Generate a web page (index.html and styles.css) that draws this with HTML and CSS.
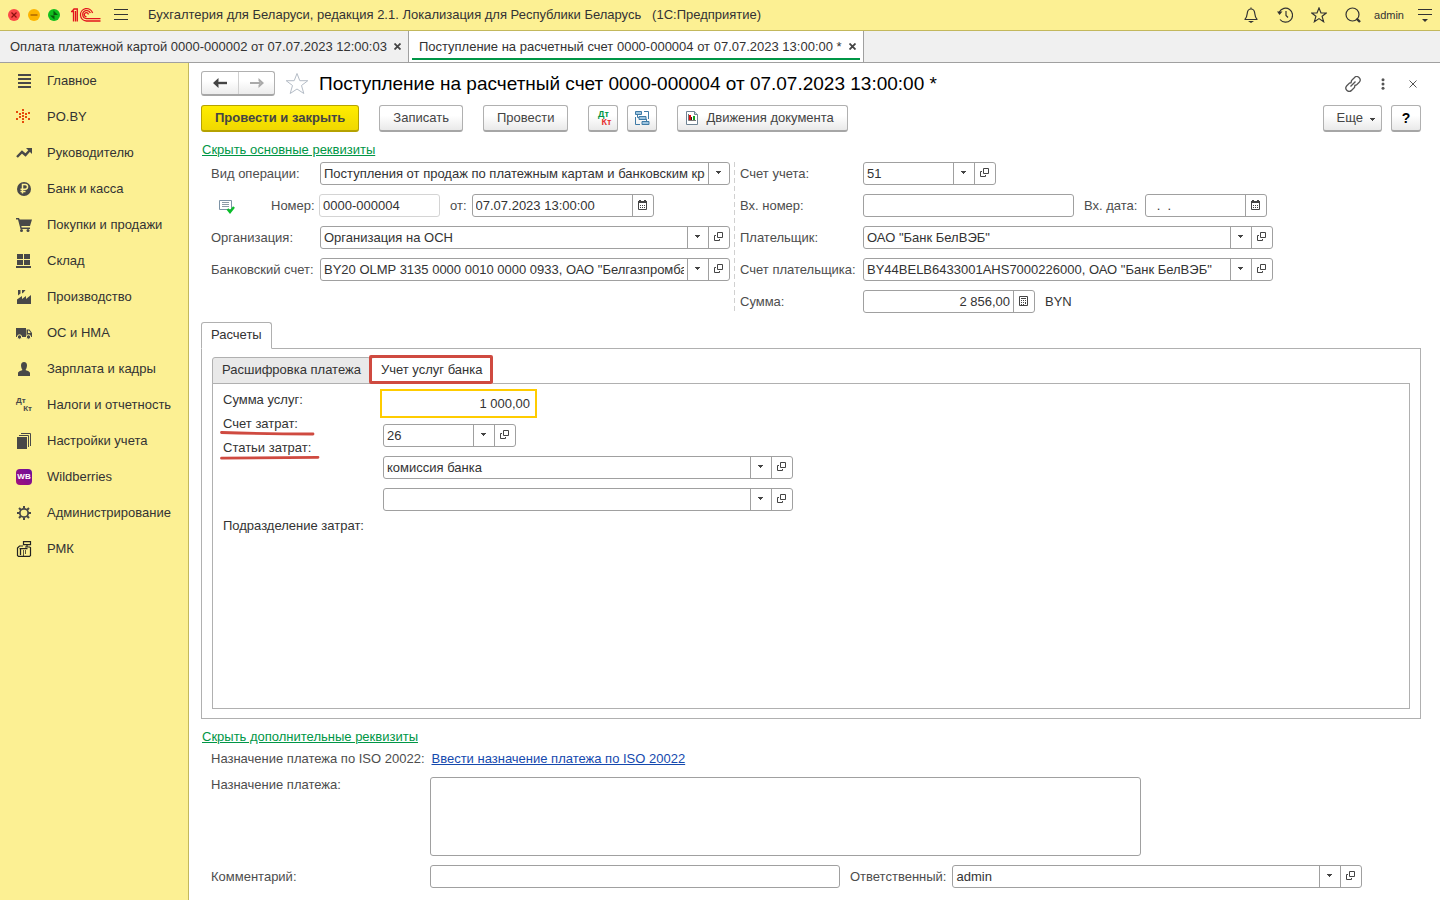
FILE: index.html
```html
<!DOCTYPE html>
<html lang="ru">
<head>
<meta charset="utf-8">
<meta name="viewport" content="width=device-width, initial-scale=1">
<title>Поступление на расчетный счет</title>
<link rel="stylesheet" href="styles.css">
</head>
<body>
<svg class="defs" aria-hidden="true">
  <symbol id="i-down" viewBox="0 0 8 4"><path d="M1 0h5v1h-1v1h-1v1h-1v-1h-1v-1h-1z" fill="#444"/></symbol>
  <symbol id="i-open" viewBox="0 0 10 10"><path d="M3.500.5h5v5h-5zM2 3.500H.5v5h5V7" fill="none" stroke="#444"/></symbol>
  <symbol id="i-cal" viewBox="0 0 10 10"><path d="M.5 1.500h8v8h-8z" fill="none" stroke="#444"/><path d="M0 1h9v2H0zM1 0h2v1H1zM6 0h2v1H6z" fill="#444"/><path d="M2 5h1v1H2zM4 5h1v1H4zM6 5h1v1H6zM2 7h1v1H2zM4 7h1v1H4zM6 7h1v1H6z" fill="#444"/></symbol>
  <symbol id="i-calc" viewBox="0 0 10 11"><path d="M.5.5h8v9h-8zM2 2.500h5" fill="none" stroke="#444"/><path d="M2 4h1v1H2zM4 4h1v1H4zM6 4h1v1H6zM2 6h1v1H2zM4 6h1v1H4zM6 6h1v2H6zM2 8h1v1H2zM4 8h1v1H4z" fill="#444"/></symbol>
</svg>

<header class="topbar">
  <button class="dot dot-red" aria-label="Закрыть окно"><svg viewBox="0 0 12 12"><path d="M3.500 3.500l5 5M8.500 3.500l-5 5" stroke="#8c1010" stroke-width="1.200"/></svg></button>
  <button class="dot dot-amber" aria-label="Свернуть"><svg viewBox="0 0 12 12"><path d="M2.500 6h7" stroke="#a86400" stroke-width="1.400"/></svg></button>
  <button class="dot dot-green" aria-label="Развернуть"><svg viewBox="0 0 12 12"><path d="M2 6.500h4.500V10.500zM5.500 1.500V6H10z" fill="#075c0b"/></svg></button>
  <svg class="logo" viewBox="0 0 30 16" fill="none" stroke="#e2141c" stroke-width="1.300"><path d="M0 4.500h2.500V14.500M1 4.500 3 2h3.300V14.500M4.500 4V14.500"/><path d="M21.600 6A6.200 6.200 0 1 0 15.500 14H29.500M19.400 6A4 4 0 1 0 15.500 11.600H29.500M17.300 7.500A2 2 0 1 0 15.500 9.600"/></svg>
  <button class="plain menu" aria-label="Меню"><svg width="14" height="12" viewBox="0 0 14 12"><path d="M0 .5h14M0 5.500h14M0 10.500h14" stroke="#333"/></svg></button>
  <span class="app-title">Бухгалтерия для Беларуси, редакция 2.1. Локализация для Республики Беларусь &nbsp; (1С:Предприятие)</span>
  <div class="tools">
    <button class="plain tool" aria-label="Уведомления"><svg width="16" height="16" viewBox="0 0 16 16" fill="none" stroke="#333" stroke-width="1.200"><path d="M8 .5v1.500M1.500 12.500h13M2 12.300C3.900 10.500 4 8.500 4.300 6 4.600 3.400 6 2 8 2s3.400 1.400 3.700 4c.3 2.500.4 4.500 2.300 6.300"/><path d="M5 14h6l-3 2z" fill="#333" stroke="none"/></svg></button>
    <button class="plain tool" aria-label="История"><svg width="16" height="16" viewBox="0 0 16 16" fill="none" stroke="#333" stroke-width="1.200"><path d="M2.300 5A7 7 0 1 1 3 12.500M9 4v4.500l2 2"/><path d="M0 4.500h5.500L2.500 8z" fill="#333" stroke="none"/></svg></button>
    <button class="plain tool" aria-label="Избранное"><svg width="16" height="16" viewBox="0 0 16 16" fill="none" stroke="#333" stroke-width="1.200"><path d="M8 1l2 5h5.300l-4.200 3.300 1.500 5.400L8 11.600l-4.600 3.100 1.500-5.400L.7 6H6z"/></svg></button>
    <button class="plain tool" aria-label="Поиск"><svg width="16" height="16" viewBox="0 0 16 16" fill="none" stroke="#333"><circle cx="7.500" cy="7.500" r="6.500" stroke-width="1.200"/><path d="M11.500 11.500l3.500 3.500" stroke-width="2.400"/></svg></button>
    <button class="plain user">admin</button>
    <button class="plain" aria-label="Сервис"><svg width="14" height="14" viewBox="0 0 14 14"><path d="M0 1.500h14M0 6.500h14" stroke="#333"/><path d="M4 11h6l-3 3z" fill="#333"/></svg></button>
  </div>
</header>

<nav class="windows" aria-label="Открытые окна">
  <div class="win"><button class="plain">Оплата платежной картой 0000-000002 от 07.07.2023 12:00:03</button><button class="plain x" aria-label="Закрыть"><svg width="7" height="7" viewBox="0 0 7 7"><path d="M.5.5l6 6M6.500.5l-6 6" stroke="#444" stroke-width="1.800"/></svg></button></div>
  <div class="win win-on"><button class="plain">Поступление на расчетный счет 0000-000004 от 07.07.2023 13:00:00 *</button><button class="plain x" aria-label="Закрыть"><svg width="7" height="7" viewBox="0 0 7 7"><path d="M.5.5l6 6M6.500.5l-6 6" stroke="#444" stroke-width="1.800"/></svg></button></div>
</nav>

<div class="body">
  <nav class="side" aria-label="Разделы">
    <a href="#"><svg viewBox="0 0 16 16"><path d="M2 1h13v2H2zM2 5h13v2H2zM2 9h13v2H2zM2 13h13v2H2z"/></svg>Главное</a>
    <a href="#"><svg viewBox="0 0 16 16" fill="#e64a0c"><path d="M6 0h2v2H6zM6 3h2v2H6zM6 6h2v2H6zM6 9h2v2H6zM6 12h2v2H6zM0 2h2v2H0zM3 4h2v2H3zM9 4h2v2H9zM12 3h2v2h-2zM3 7h2v2H3zM9 7h2v2H9zM0 9h2v2H0zM12 9h2v2h-2z"/></svg>PO.BY</a>
    <a href="#"><svg viewBox="0 0 16 16"><path d="M1 12l5-5 3.500 3L14 5" fill="none" stroke="#484848" stroke-width="2.400"/><path d="M10 3h6v6z"/></svg>Руководителю</a>
    <a href="#"><svg viewBox="0 0 16 16"><circle cx="8" cy="8" r="7"/><path d="M6.500 12.500v-9h2.700a2.300 2.300 0 0 1 0 4.700H4.500M4.500 10.500h5" fill="none" stroke="#fcf093" stroke-width="1.500"/></svg>Банк и касса</a>
    <a href="#"><svg viewBox="0 0 16 16"><path d="M0 1h3l.7 1.500H16L14 9H5.300l.4 1.500H14V12H4.500L2 2.500H0z"/><circle cx="5.500" cy="13.500" r="1.500"/><circle cx="12" cy="13.500" r="1.500"/></svg>Покупки и продажи</a>
    <a href="#"><svg viewBox="0 0 16 16"><path d="M1 1h6v5H1zM8 1h6v5H8zM1 7h6v5H1zM8 7h6v5H8zM0 13h15v2H0z"/></svg>Склад</a>
    <a href="#"><svg viewBox="0 0 16 16"><path d="M1 15V10.500L6 7v3l4-3v3l5-4v9zM2 1h2.500v3.500L2 6.500zM6 1h3.500L7.500 3.500 6 4.500z"/></svg>Производство</a>
    <a href="#"><svg viewBox="0 0 16 16"><path d="M0 3h10v9H0zM10.500 4.500h3L16 8v4h-5.500zM12 5.500V8h2.700L13 5.500z" fill-rule="evenodd"/><circle cx="3.500" cy="12" r="2.200" stroke="#fcf093"/><circle cx="12.500" cy="12" r="2.200" stroke="#fcf093"/></svg>ОС и НМА</a>
    <a href="#"><svg viewBox="0 0 16 16"><path d="M8 1c2 0 3 1.500 3 3.500S9.800 8.800 9.500 9c1 .8 4.500 1.200 4.500 3v3H2v-3c0-1.800 3.500-2.200 4.500-3C6.200 8.800 5 6.500 5 4.500S6 1 8 1z"/></svg>Зарплата и кадры</a>
    <a href="#"><span class="dtkt"><i>Дт</i><i>Кт</i></span>Налоги и отчетность</a>
    <a href="#"><svg viewBox="0 0 16 16"><path d="M1 4h10v12H1z"/><path d="M3 2.500h9.500V14M5 .5h9.500V13" fill="none" stroke="#484848"/></svg>Настройки учета</a>
    <a href="#"><span class="wb">WB</span>Wildberries</a>
    <a href="#"><svg viewBox="0 0 16 16" fill="none" stroke="#484848"><circle cx="8" cy="8" r="4.200" stroke-width="1.800"/><path d="M8 1v2.500M8 12.500V15M1 8h2.500M12.500 8H15M3 3l2 2M11 11l2 2M13 3l-2 2M3 13l2-2" stroke-width="2"/></svg>Администрирование</a>
    <a href="#"><svg viewBox="0 0 16 16" fill="none" stroke="#222" stroke-width="1.200"><path d="M7.500.6h7v3h-7zM11 3.600v2.400M7 5H3.500L1.500 7v7.500l1 .9h11l1-.9V6.500L13.500 6H9"/><path d="M3.500 7.600h8M4.500 8v6M7 10h1M9 10h1M7 12h1M9 12h1M7 14h1" stroke-width="1.300"/></svg>РМК</a>
  </nav>

  <main class="main">
    <div class="head">
      <div class="history">
        <button aria-label="Назад"><svg width="14" height="10" viewBox="0 0 14 10"><path d="M14 5H4" stroke="#444" stroke-width="2.400"/><path d="M0 5l5.500-5v3.500L4 5l1.500 1.500V10z" fill="#444"/></svg></button>
        <button aria-label="Вперед"><svg width="14" height="10" viewBox="0 0 14 10"><path d="M0 5h10" stroke="#aaa" stroke-width="2"/><path d="M14 5L8.500 0v3l2 2-2 2v3z" fill="#aaa"/></svg></button>
      </div>
      <button class="plain fav" aria-label="В избранное"><svg width="24" height="23" viewBox="0 0 24 23"><path d="M12 1.500l2.800 7.200h8l-6.300 4.800 2.300 8L12 17l-6.800 4.500 2.300-8L1.200 8.700h8z" fill="#fff" stroke="#b4bcc6"/></svg></button>
      <h1>Поступление на расчетный счет 0000-000004 от 07.07.2023 13:00:00 *</h1>
      <div class="head-tools">
        <button class="plain" aria-label="Ссылка"><svg width="16" height="16" viewBox="0 0 16 16" fill="none" stroke="#555" stroke-width="1.300"><path d="M6 7 6.500 4.500 9.300 1.700a3 3 0 0 1 4.900 4.500L11.500 9 9.500 9.500M10 9 9.500 11.500 6.700 14.300A3 3 0 0 1 1.800 9.800L4.500 7 6.500 6.500M5.500 10.500l5-5"/></svg></button>
        <button class="plain" aria-label="Еще"><svg width="4" height="12" viewBox="0 0 4 12" fill="#555"><circle cx="2" cy="1.700" r="1.500"/><circle cx="2" cy="6" r="1.500"/><circle cx="2" cy="10.300" r="1.500"/></svg></button>
        <button class="plain" aria-label="Закрыть"><svg width="8" height="8" viewBox="0 0 8 8"><path d="M.5.5l7 7M7.500.5l-7 7" stroke="#555"/></svg></button>
      </div>
    </div>

    <div class="commands">
      <button class="btn primary">Провести и закрыть</button>
      <button class="btn">Записать</button>
      <button class="btn">Провести</button>
      <div class="pair">
        <button class="btn square" aria-label="Дт Кт"><span class="dtkt dtkt-color"><i>Дт</i><i>Кт</i></span></button>
        <button class="btn square" aria-label="Структура подчиненности"><svg width="15" height="15" viewBox="0 0 15 15" fill="none" stroke="#3f7ba6"><path d="M9 .5h4.500V8M.5 6v7.500H5M2.500 4v2.500H4M11.500 8v2"/><path d="M.5.5h6v3h-6zM4 5.500h7v3H4zM7 10.500h7v3H7z" fill="#9cc3de"/></svg></button>
      </div>
      <button class="btn with-icon"><svg width="12" height="14" viewBox="0 0 12 14"><path d="M.5.5h8l3 3v10H.5z" fill="#fff" stroke="#6f8494"/><path d="M8.500.5v3h3" fill="#cdd8e0" stroke="#6f8494"/><path d="M3 4h2v5H3z" fill="#e01010"/><path d="M5 6h1v3H5z" fill="#222"/><path d="M7 5h2v4H7z" fill="#10a020"/><path d="M2.500 3v6.500H10" fill="none" stroke="#777"/></svg>Движения документа</button>
      <button class="btn more">Еще<svg width="8" height="4"><use href="#i-down"/></svg></button>
      <button class="btn square help">?</button>
    </div>

    <a class="toggle" href="#">Скрыть основные реквизиты</a>

    <form class="requisites">
      <div class="col col-left">
        <div class="row"><label for="op">Вид операции:</label>
          <div class="field wide"><select id="op"><option>Поступления от продаж по платежным картам и банковским кредитам</option></select><span class="cell"><svg width="8" height="4"><use href="#i-down"/></svg></span></div></div>
        <div class="row"><svg class="posted" width="16" height="14" viewBox="0 0 16 14"><path d="M.5.5h12v9H.5z" fill="#fff" stroke="#7d93a6"/><path d="M3 2.500h7M3 4.500h7M3 6.500h7" stroke="#8c9aa6"/><path d="M8.500 9l2.500 3 4-5" fill="none" stroke="#0bbd2b" stroke-width="2.400"/></svg>
          <label class="auto" for="num">Номер:</label>
          <div class="field num"><input id="num" value="0000-000004" readonly></div>
          <label class="inline" for="dt">от:</label>
          <div class="field date"><input id="dt" value="07.07.2023 13:00:00"><button type="button" class="cell" aria-label="Календарь"><svg width="10" height="10"><use href="#i-cal"/></svg></button></div></div>
        <div class="row"><label for="org">Организация:</label>
          <div class="field wide"><input id="org" value="Организация на ОСН"><button type="button" class="cell" aria-label="Выбрать"><svg width="8" height="4"><use href="#i-down"/></svg></button><button type="button" class="cell" aria-label="Открыть"><svg width="10" height="10"><use href="#i-open"/></svg></button></div></div>
        <div class="row"><label for="acc">Банковский счет:</label>
          <div class="field wide"><input id="acc" value="BY20 OLMP 3135 0000 0010 0000 0933, ОАО &quot;Белгазпромбанк&quot;"><button type="button" class="cell" aria-label="Выбрать"><svg width="8" height="4"><use href="#i-down"/></svg></button><button type="button" class="cell" aria-label="Открыть"><svg width="10" height="10"><use href="#i-open"/></svg></button></div></div>
      </div>
      <div class="col col-right">
        <div class="row"><label for="ledger">Счет учета:</label>
          <div class="field short"><input id="ledger" value="51"><button type="button" class="cell" aria-label="Выбрать"><svg width="8" height="4"><use href="#i-down"/></svg></button><button type="button" class="cell" aria-label="Открыть"><svg width="10" height="10"><use href="#i-open"/></svg></button></div></div>
        <div class="row"><label for="innum">Вх. номер:</label>
          <div class="field innum"><input id="innum"></div>
          <label class="inline" for="indate">Вх. дата:</label>
          <div class="field indate"><input id="indate" value="&nbsp; .&nbsp; ."><button type="button" class="cell" aria-label="Календарь"><svg width="10" height="10"><use href="#i-cal"/></svg></button></div></div>
        <div class="row"><label for="payer">Плательщик:</label>
          <div class="field wide"><input id="payer" value="ОАО &quot;Банк БелВЭБ&quot;"><button type="button" class="cell" aria-label="Выбрать"><svg width="8" height="4"><use href="#i-down"/></svg></button><button type="button" class="cell" aria-label="Открыть"><svg width="10" height="10"><use href="#i-open"/></svg></button></div></div>
        <div class="row"><label for="payeracc">Счет плательщика:</label>
          <div class="field wide"><input id="payeracc" value="BY44BELB6433001AHS7000226000, ОАО &quot;Банк БелВЭБ&quot;"><button type="button" class="cell" aria-label="Выбрать"><svg width="8" height="4"><use href="#i-down"/></svg></button><button type="button" class="cell" aria-label="Открыть"><svg width="10" height="10"><use href="#i-open"/></svg></button></div></div>
        <div class="row"><label for="sum">Сумма:</label>
          <div class="field sum"><input id="sum" class="right" value="2 856,00"><button type="button" class="cell" aria-label="Калькулятор"><svg width="10" height="11"><use href="#i-calc"/></svg></button></div>
          <span class="unit">BYN</span></div>
      </div>
    </form>

    <div class="tabs" role="tablist"><button class="tab tab-on" role="tab" aria-selected="true">Расчеты</button></div>
    <section class="panel outer">
      <div class="tabs" role="tablist"><button class="tab" role="tab" aria-selected="false">Расшифровка платежа</button><button class="tab tab-on marked" role="tab" aria-selected="true">Учет услуг банка</button></div>
      <div class="panel inner">
        <div class="cost-labels">
          <label for="fee">Сумма услуг:</label>
          <label for="costacc">Счет затрат:<svg class="mark" width="95" height="5" viewBox="0 0 95 5"><path d="M1.500 1.500Q45 2.800 93 3" fill="none" stroke="#cf4a40" stroke-width="2.800" stroke-linecap="round"/></svg></label>
          <label for="costitem">Статьи затрат:<svg class="mark" width="100" height="5" viewBox="0 0 100 5"><path d="M1.500 3.200Q50 2.800 98 2.300" fill="none" stroke="#cf4a40" stroke-width="2.800" stroke-linecap="round"/></svg></label>
          <label class="last" for="dept">Подразделение затрат:</label>
        </div>
        <div class="cost-fields">
          <input id="fee" class="fee" value="1 000,00">
          <div class="stack">
            <div class="field short"><input id="costacc" value="26"><button type="button" class="cell" aria-label="Выбрать"><svg width="8" height="4"><use href="#i-down"/></svg></button><button type="button" class="cell" aria-label="Открыть"><svg width="10" height="10"><use href="#i-open"/></svg></button></div>
            <div class="field wide"><input id="costitem" value="комиссия банка"><button type="button" class="cell" aria-label="Выбрать"><svg width="8" height="4"><use href="#i-down"/></svg></button><button type="button" class="cell" aria-label="Открыть"><svg width="10" height="10"><use href="#i-open"/></svg></button></div>
            <div class="field wide"><input id="dept"><button type="button" class="cell" aria-label="Выбрать"><svg width="8" height="4"><use href="#i-down"/></svg></button><button type="button" class="cell" aria-label="Открыть"><svg width="10" height="10"><use href="#i-open"/></svg></button></div>
          </div>
        </div>
      </div>
    </section>

    <a class="toggle" href="#">Скрыть дополнительные реквизиты</a>
    <div class="extra">
      <div class="iso"><span>Назначение платежа по ISO 20022:</span><a href="#">Ввести назначение платежа по ISO 20022</a></div>
      <div class="purpose"><label for="purpose">Назначение платежа:</label><textarea id="purpose"></textarea></div>
      <div class="row"><label for="comment">Комментарий:</label>
        <div class="field wide"><input id="comment"></div>
        <label class="inline" for="resp">Ответственный:</label>
        <div class="field wide"><input id="resp" value="admin"><button type="button" class="cell" aria-label="Выбрать"><svg width="8" height="4"><use href="#i-down"/></svg></button><button type="button" class="cell" aria-label="Открыть"><svg width="10" height="10"><use href="#i-open"/></svg></button></div></div>
    </div>
  </main>
</div>
</body>
</html>
```

FILE: styles.css
```css
* { box-sizing: border-box; }

body {
  margin: 0;
  min-height: 100vh;
  display: flex;
  flex-direction: column;
  background: #fff;
  color: #333;
  font: 13px/16px "Liberation Sans", Arial, sans-serif;
}

button, input, select, textarea { font: inherit; color: inherit; }
button { white-space: nowrap; }
svg { display: block; flex: none; }
.defs { position: absolute; width: 0; height: 0; }

.plain {
  display: flex;
  align-items: center;
  justify-content: center;
  padding: 0;
  border: 0;
  background: none;
}

/* Top bar */
.topbar {
  display: flex;
  align-items: center;
  height: 31px;
  padding: 0 8px;
  background: #fcf093;
  border-bottom: 1px solid #c3b85c;
}
.dot {
  width: 12px;
  height: 12px;
  margin-right: 8px;
  padding: 0;
  border: 0;
  border-radius: 50%;
}
.dot-red { background: #fb4848; }
.dot-amber { background: #fdb400; }
.dot-green { background: #10bf1e; }
.logo { width: 30px; height: 16px; margin-left: 3px; }
.menu { margin: 0 20px 0 13px; }
.app-title { white-space: nowrap; }
.tools {
  display: flex;
  align-items: center;
  margin-left: auto;
}
.tool { width: 34px; }
.user { margin: 0 14px 0 4px; font-size: 11px; }

/* Open windows */
.windows {
  display: flex;
  height: 32px;
  background: #f0f0f0;
  border-bottom: 1px solid #a0a0a0;
}
.win {
  display: flex;
  align-items: center;
  gap: 7px;
  padding: 0 7px 0 10px;
  border-right: 1px solid #a0a0a0;
}
.win-on {
  background: linear-gradient(#009646, #009646) center bottom 2px / calc(100% - 6px) 2px no-repeat #fff;
}

.body { display: flex; flex: 1; }

/* Sections */
.side {
  flex: none;
  width: 189px;
  background: #fcf093;
  border-right: 1px solid #c3b85c;
}
.side a {
  display: flex;
  align-items: center;
  gap: 15px;
  height: 36px;
  padding-left: 16px;
  color: #333;
  text-decoration: none;
}
.side svg { width: 16px; height: 16px; }
.side svg:not([fill]) { fill: #484848; }
.dtkt {
  display: flex;
  flex-direction: column;
  width: 16px;
  color: #484848;
  font: bold 8px/8px "Liberation Sans", Arial, sans-serif;
}
.dtkt i { font-style: normal; }
.dtkt i + i { align-self: flex-end; }
.dtkt-color { font-size: 9px; }
.dtkt-color i { color: #009646; }
.dtkt-color i + i { color: #e62e2e; }
.wb {
  width: 16px;
  height: 16px;
  border-radius: 4px;
  background: linear-gradient(45deg, #a3107c, #6a0f9c);
  color: #fff;
  font: bold 8px/16px "Liberation Sans", Arial, sans-serif;
  text-align: center;
}

/* Document */
.main {
  flex: 1;
  min-width: 0;
  display: flex;
  flex-direction: column;
  padding: 8px 19px 12px 12px;
}
.head { display: flex; align-items: center; height: 25px; }
.history {
  display: flex;
  height: 25px;
  border: 1px solid #b0b0b0;
  border-bottom: 2px solid #a6a6a6;
  border-radius: 3px;
  background: linear-gradient(#fff 40%, #ececec);
}
.history button {
  display: flex;
  align-items: center;
  justify-content: center;
  width: 36px;
  padding: 0;
  border: 0;
  background: none;
}
.history button + button { border-left: 1px solid #d0d0d0; }
.fav { margin: 0 10px; }
h1 {
  margin: 0;
  color: #000;
  font-size: 19px;
  line-height: 24px;
  font-weight: normal;
  white-space: nowrap;
}
.head-tools { display: flex; margin: 0 -7px 0 auto; }
.head-tools button { width: 30px; }

.commands { display: flex; margin-top: 9px; }
.btn {
  display: flex;
  align-items: center;
  justify-content: center;
  height: 27px;
  padding: 0 13px;
  border: 1px solid #b0b0b0;
  border-bottom: 2px solid #a6a6a6;
  border-radius: 3px;
  background: linear-gradient(#fff 40%, #e9e9e9);
  color: #444;
}
.commands > .btn, .pair { margin-right: 20px; }
.primary {
  border-color: #b5a200;
  background: linear-gradient(#ffed00, #f0d800);
  font-weight: bold;
}
.pair { display: flex; gap: 9px; }
.square { width: 30px; padding: 0; }
.with-icon { padding-left: 8px; gap: 8px; }
.commands > .more { gap: 6px; margin: 0 9px 0 auto; padding: 0 4px 0 13px; }
.more svg { margin-top: 4px; }
.commands > .help { margin-right: 0; color: #000; font-weight: bold; font-size: 14px; }

.toggle { align-self: flex-start; margin: 10px 0 0 1px; color: #009646; }

/* Fields */
.row { display: flex; align-items: center; height: 23px; white-space: nowrap; }
.field {
  display: flex;
  min-width: 0;
  height: 23px;
  border: 1px solid #a0a0a0;
  border-radius: 3px;
  background: #fff;
  overflow: hidden;
}
.field input, .field select {
  flex: 1;
  width: 0;
  min-width: 0;
  padding: 0 3px;
  border: 0;
  outline: 0;
  background: none;
  appearance: none;
}
.field select { overflow: hidden; text-overflow: clip; }
.cell {
  display: flex;
  flex: none;
  justify-content: center;
  width: 21px;
  padding: 5px 0 0;
  border: 0;
  border-left: 1px solid #a0a0a0;
  background: none;
}
.cell svg[height="4"] { margin-top: 3px; }
.field .right { text-align: right; }
.wide { flex: 0 1 410px; }
.short { flex: 0 1 133px; }
.num { flex: 0 1 121px; border-color: #d4d4d4; }
.date { flex: 0 1 182px; }
.innum { flex: 0 1 211px; }
.indate { flex: 0 1 122px; }
.sum { flex: 0 1 172px; }
.unit { margin-left: 10px; }

.requisites { display: flex; margin-top: 4px; color: #333; }
.col { display: flex; flex-direction: column; gap: 9px; min-width: 0; }
.col-left {
  flex: 0 1 534px;
  padding: 0 5px 0 10px;
  background: repeating-linear-gradient(#d0d0d0 0 5px, #fff 5px 8px) right / 1px 100% no-repeat;
}
.col-right { flex: 0 1 543px; padding-left: 5px; }
.row label, .iso span, .purpose label { color: #4d4d4d; }
.col-left label { flex: none; width: 109px; }
.col-right label { flex: none; width: 123px; }
.col .auto { width: 48px; }
.col .inline { width: auto; margin: 0 5px 0 10px; }
.col-right .inline { margin-right: 8px; }
.posted { margin: 2px 36px 0 8px; }

/* Tabs */
.tabs { position: relative; display: flex; margin-bottom: -1px; }
.main > .tabs { margin-top: 9px; }
.tab {
  height: 27px;
  padding: 0 9px 2px;
  border: 1px solid #b0b0b0;
  border-radius: 3px 3px 0 0;
  background: #e9e9e9;
}
.tab-on { background: #fff; border-bottom-color: #fff; }
.marked { position: relative; border-left: 0; padding: 0 10px 2px; }
.marked::after {
  content: "";
  position: absolute;
  inset: -3px -1px -1px -2px;
  border: 3px solid #cf4a40;
  border-radius: 2px;
}
.panel { border: 1px solid #b0b0b0; }
.outer { flex: 1; display: flex; flex-direction: column; padding: 8px 10px 9px; }
.inner { flex: 1; display: flex; padding: 4px 10px; }
.cost-labels { display: flex; flex-direction: column; width: 157px; }
.cost-labels label { position: relative; line-height: 24px; }
.cost-labels .last { margin-top: 54px; }
.mark { position: absolute; left: -3px; top: 19px; }
.cost-fields { flex: 1; padding-top: 1px; }
.fee {
  display: block;
  width: 157px;
  height: 29px;
  padding: 0 5px;
  border: 2px solid #ffcc00;
  outline: 0;
  text-align: right;
}
.stack { display: flex; flex-direction: column; gap: 9px; padding: 6px 0 0 3px; }
.stack .field { flex: none; width: 410px; }
.stack .short { width: 133px; }

/* Extra requisites */
.extra { padding-left: 10px; }
.iso { display: flex; gap: 7px; margin-top: 6px; }
.iso a { color: #1549ae; }
.purpose { display: flex; margin: 10px 0 9px; }
.extra label { flex: none; width: 219px; }
.extra .inline { width: auto; margin: 0 6px 0 10px; }
textarea {
  flex: 0 1 711px;
  height: 79px;
  border: 1px solid #a0a0a0;
  border-radius: 3px;
  resize: none;
}
```
